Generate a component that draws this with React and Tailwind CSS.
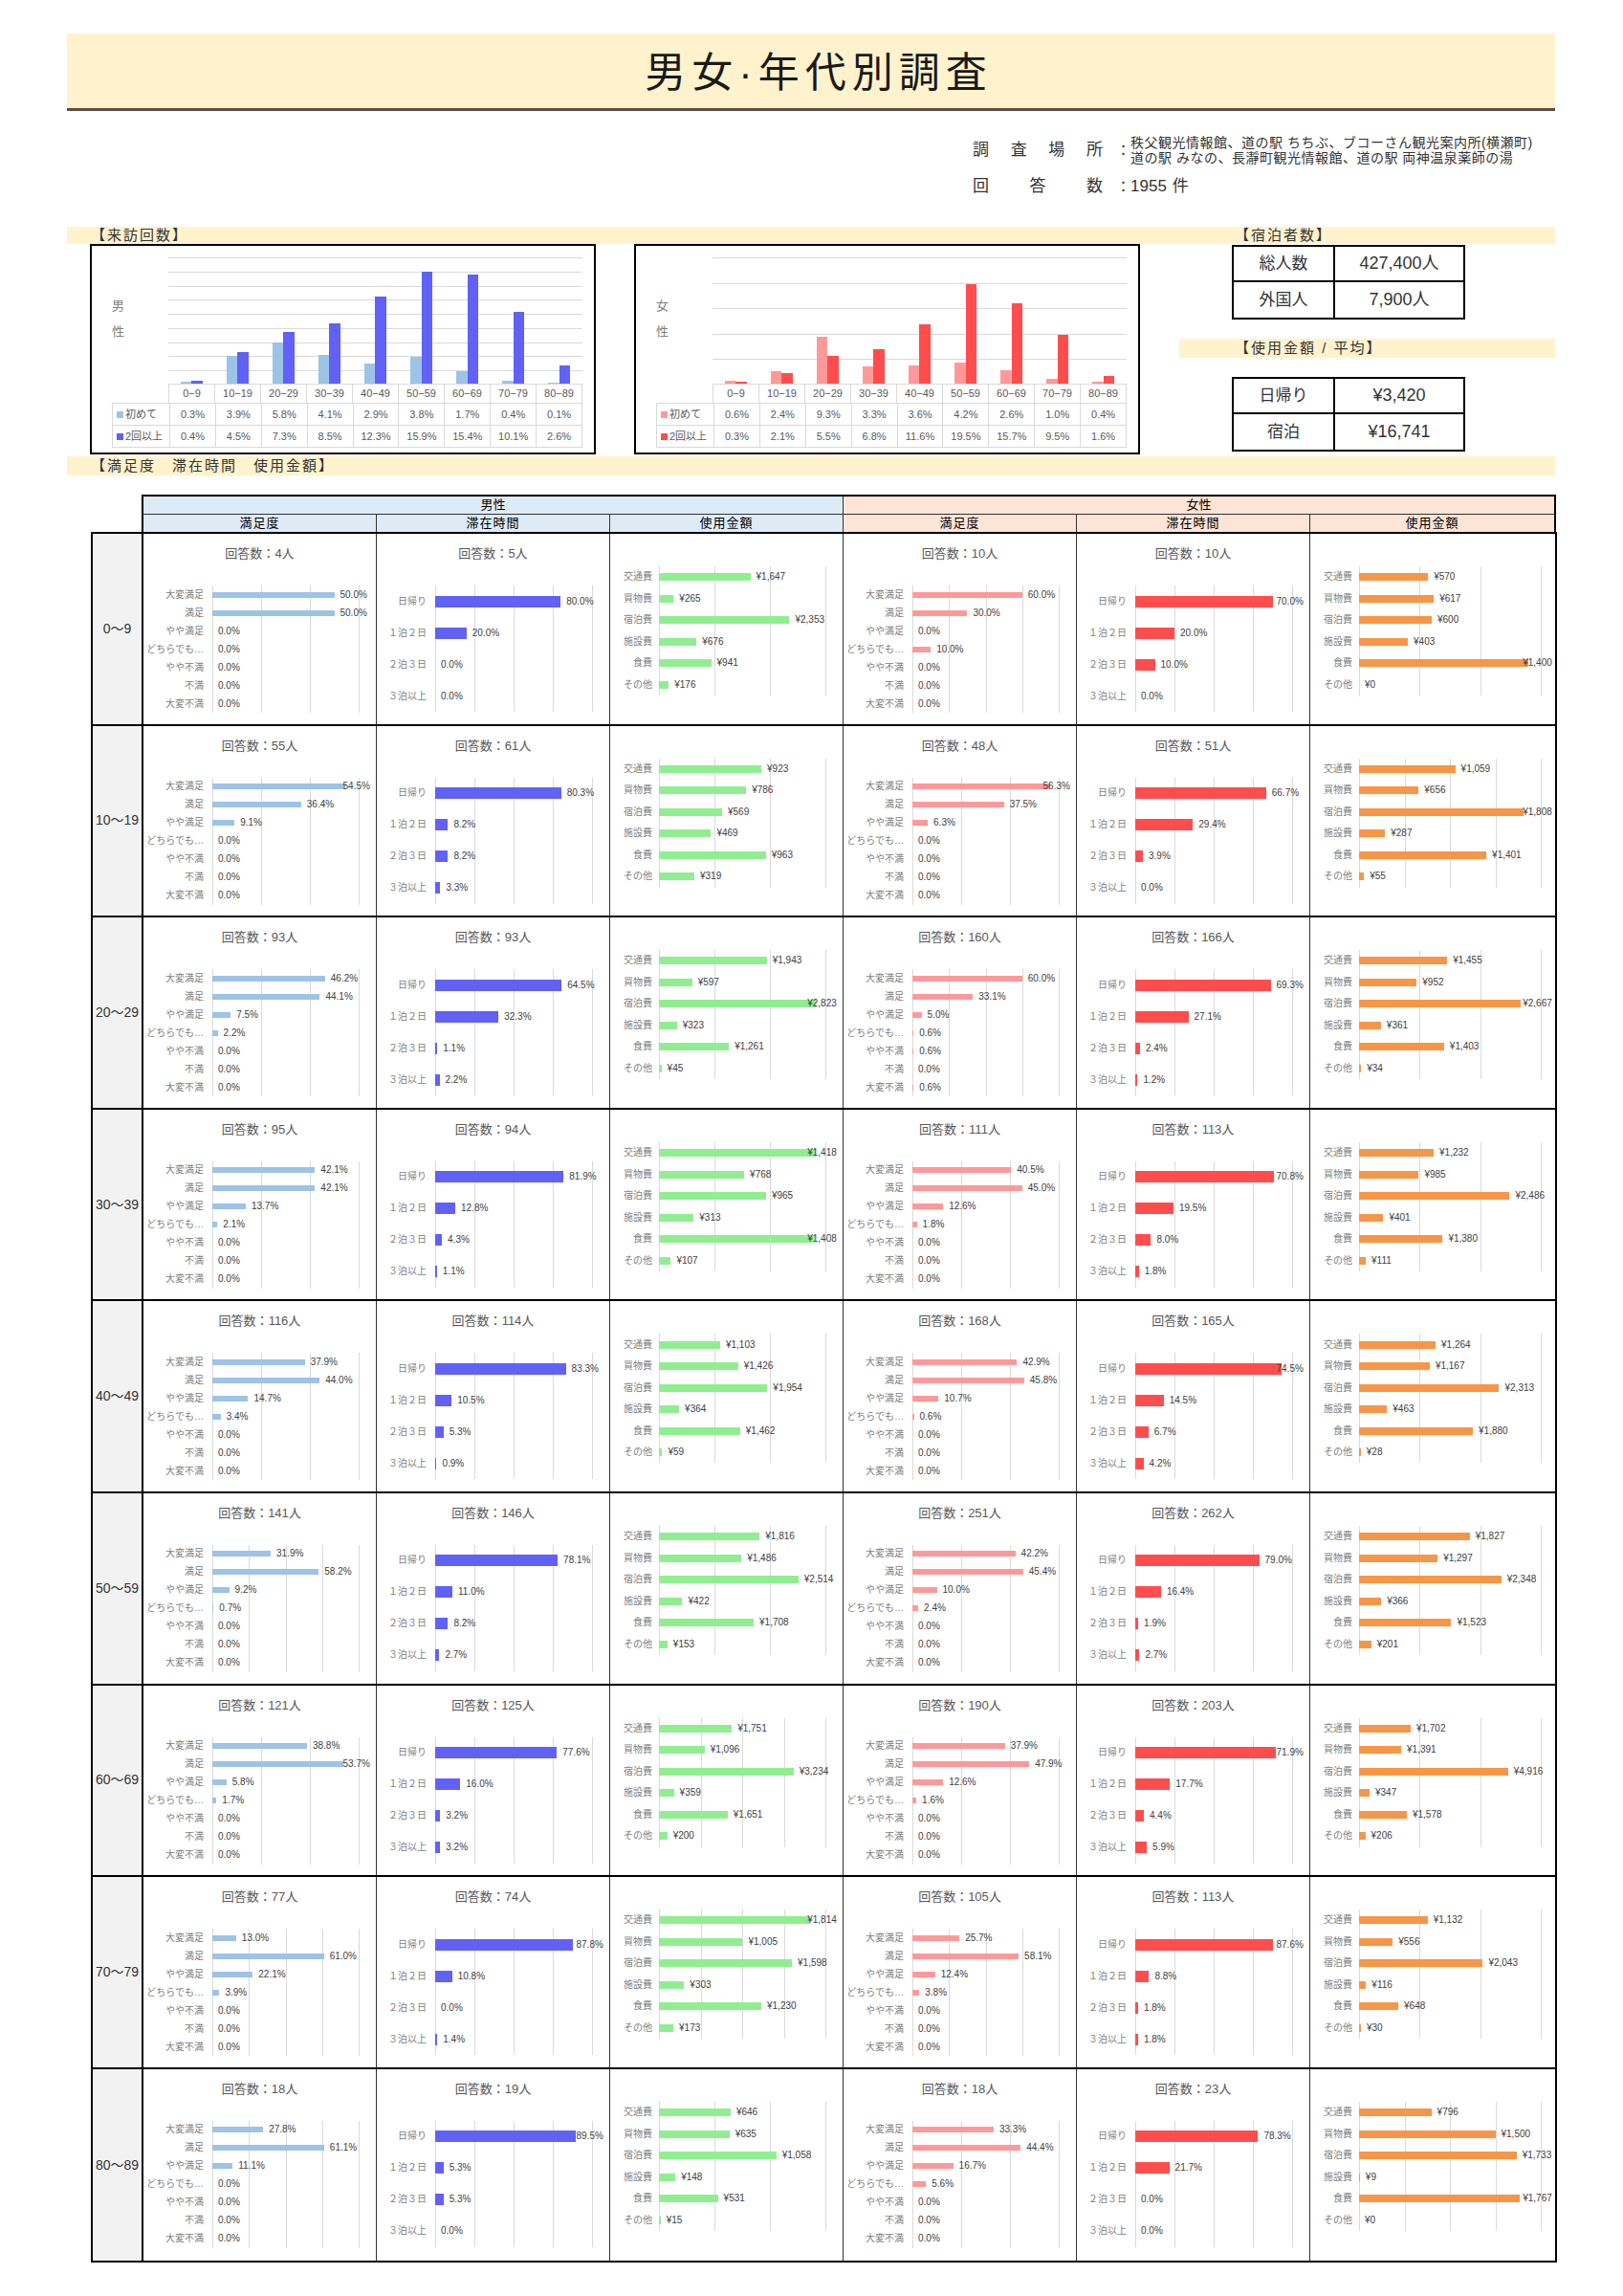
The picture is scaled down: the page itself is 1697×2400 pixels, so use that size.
import React from "react";

const AGES = ["0～9", "10～19", "20～29", "30～39", "40～49", "50～59", "60～69", "70～79", "80～89"];
const TOP_AGES = ["0−9", "10−19", "20−29", "30−39", "40−49", "50−59", "60−69", "70−79", "80−89"];

const SAT = ["大変満足", "満足", "やや満足", "どちらでも…", "やや不満", "不満", "大変不満"];
const STAY = ["日帰り", "１泊２日", "２泊３日", "３泊以上"];
const SPEND = ["交通費", "買物費", "宿泊費", "施設費", "食費", "その他"];

// [満足度回答数, 満足度, 滞在回答数, 滞在時間, 使用金額]
const DATA = [
  {
    m: [4, [50.0, 50.0, 0, 0, 0, 0, 0], 5, [80.0, 20.0, 0, 0], [1647, 265, 2353, 676, 941, 176]],
    f: [10, [60.0, 30.0, 0, 10.0, 0, 0, 0], 10, [70.0, 20.0, 10.0, 0], [570, 617, 600, 403, 1400, 0]],
  },
  {
    m: [55, [54.5, 36.4, 9.1, 0, 0, 0, 0], 61, [80.3, 8.2, 8.2, 3.3], [923, 786, 569, 469, 963, 319]],
    f: [48, [56.3, 37.5, 6.3, 0, 0, 0, 0], 51, [66.7, 29.4, 3.9, 0], [1059, 656, 1808, 287, 1401, 55]],
  },
  {
    m: [93, [46.2, 44.1, 7.5, 2.2, 0, 0, 0], 93, [64.5, 32.3, 1.1, 2.2], [1943, 597, 2823, 323, 1261, 45]],
    f: [160, [60.0, 33.1, 5.0, 0.6, 0.6, 0, 0.6], 166, [69.3, 27.1, 2.4, 1.2], [1455, 952, 2667, 361, 1403, 34]],
  },
  {
    m: [95, [42.1, 42.1, 13.7, 2.1, 0, 0, 0], 94, [81.9, 12.8, 4.3, 1.1], [1418, 768, 965, 313, 1408, 107]],
    f: [111, [40.5, 45.0, 12.6, 1.8, 0, 0, 0], 113, [70.8, 19.5, 8.0, 1.8], [1232, 985, 2486, 401, 1380, 111]],
  },
  {
    m: [116, [37.9, 44.0, 14.7, 3.4, 0, 0, 0], 114, [83.3, 10.5, 5.3, 0.9], [1103, 1426, 1954, 364, 1462, 59]],
    f: [168, [42.9, 45.8, 10.7, 0.6, 0, 0, 0], 165, [74.5, 14.5, 6.7, 4.2], [1264, 1167, 2313, 463, 1880, 28]],
  },
  {
    m: [141, [31.9, 58.2, 9.2, 0.7, 0, 0, 0], 146, [78.1, 11.0, 8.2, 2.7], [1816, 1486, 2514, 422, 1708, 153]],
    f: [251, [42.2, 45.4, 10.0, 2.4, 0, 0, 0], 262, [79.0, 16.4, 1.9, 2.7], [1827, 1297, 2348, 366, 1523, 201]],
  },
  {
    m: [121, [38.8, 53.7, 5.8, 1.7, 0, 0, 0], 125, [77.6, 16.0, 3.2, 3.2], [1751, 1096, 3234, 359, 1651, 200]],
    f: [190, [37.9, 47.9, 12.6, 1.6, 0, 0, 0], 203, [71.9, 17.7, 4.4, 5.9], [1702, 1391, 4916, 347, 1578, 206]],
  },
  {
    m: [77, [13.0, 61.0, 22.1, 3.9, 0, 0, 0], 74, [87.8, 10.8, 0, 1.4], [1814, 1005, 1598, 303, 1230, 173]],
    f: [105, [25.7, 58.1, 12.4, 3.8, 0, 0, 0], 113, [87.6, 8.8, 1.8, 1.8], [1132, 556, 2043, 116, 648, 30]],
  },
  {
    m: [18, [27.8, 61.1, 11.1, 0, 0, 0, 0], 19, [89.5, 5.3, 5.3, 0], [646, 635, 1058, 148, 531, 15]],
    f: [18, [33.3, 44.4, 16.7, 5.6, 0, 0, 0], 23, [78.3, 21.7, 0, 0], [796, 1500, 1733, 9, 1767, 0]],
  },
];

const M_FIRST = [0.3, 3.9, 5.8, 4.1, 2.9, 3.8, 1.7, 0.4, 0.1];
const M_REP = [0.4, 4.5, 7.3, 8.5, 12.3, 15.9, 15.4, 10.1, 2.6];
const F_FIRST = [0.6, 2.4, 9.3, 3.3, 3.6, 4.2, 2.6, 1.0, 0.4];
const F_REP = [0.3, 2.1, 5.5, 6.8, 11.6, 19.5, 15.7, 9.5, 1.6];

const pct = (v) => v.toFixed(1) + "%";
const yen = (v) => "¥" + v.toLocaleString("en-US");

// rough width of a label in Liberation Sans 10px
const textW = (s) =>
  [...s].reduce((a, c) => a + (c === "%" ? 8.9 : c === "." || c === "," ? 2.8 : 5.6), 0);

const pctAxis = (m) => {
  const step = m > 40 ? 20 : 10;
  let axis = Math.ceil((m * 1.05) / step) * step;
  if (axis > 100) axis = 100;
  return { axis, step: axis === 100 ? 25 : step };
};

const yenAxis = (m) => {
  const t = Math.max(m * 1.05, 1);
  const s = [100, 200, 250, 500, 1000, 2000].find((c) => t / c <= 4) || 2000;
  return { axis: Math.ceil(t / s) * s, step: s };
};

function HBar({ labels, values, isYen, labelCls, plotCls, plotW, rowCls, barCls }) {
  const vmax = Math.max(...values);
  const { axis, step } = isYen ? yenAxis(vmax) : pctAxis(vmax);
  const lines = [];
  for (let v = 0; v <= axis + 0.001; v += step) lines.push(v);
  return (
    <div className="flex">
      <div className={`${labelCls} shrink-0`}>
        {labels.map((l) => (
          <div key={l} className={`${rowCls} flex items-center justify-end text-[10px] leading-none text-[#808080] whitespace-nowrap`}>
            {l}
          </div>
        ))}
      </div>
      <div className={`${plotCls} relative shrink-0`}>
        {lines.map((v) => (
          <div key={v} className="absolute top-0 bottom-0 w-px bg-[#d9d9d9]" style={{ left: (v / axis) * plotW }} />
        ))}
        {values.map((v, i) => {
          const w = (v / axis) * plotW;
          const txt = isYen ? yen(v) : pct(v);
          const tw = textW(txt);
          let ml = 6;
          if (w + ml + tw > plotW + 12) ml = plotW + 12 - tw - w;
          return (
            <div key={i} className={`${rowCls} relative flex items-center`}>
              <div className={`${barCls} shrink-0`} style={{ width: w }} />
              <span className="relative shrink-0 text-[10px] leading-none text-[#404040] whitespace-nowrap" style={{ marginLeft: ml }}>
                {txt}
              </span>
            </div>
          );
        })}
      </div>
    </div>
  );
}

function Title({ n }) {
  return (
    <div className="mt-[14px] h-[14px] text-center text-[13px] leading-[14px] text-[#595959]">
      回答数：{n}人
    </div>
  );
}

function SexCells({ d, female }) {
  const [sn, s, tn, t, y] = d;
  return (
    <>
      <div className="w-[244px] shrink-0 border-r border-[#333]">
        <Title n={sn} />
        <div className="mt-[26px]">
          <HBar
            labels={SAT}
            values={s}
            labelCls="w-[72px] pr-[9px]"
            plotCls="w-[153px]"
            plotW={153}
            rowCls="h-[19px]"
            barCls={female ? "h-[6px] bg-[#ff9999]" : "h-[6px] bg-[#9dc3e6]"}
          />
        </div>
      </div>
      <div className="w-[244px] shrink-0 border-r border-[#333]">
        <Title n={tn} />
        <div className="mt-[26px]">
          <HBar
            labels={STAY}
            values={t}
            labelCls="w-[61px] pr-[9px]"
            plotCls="w-[164px]"
            plotW={164}
            rowCls="h-[33px]"
            barCls={female ? "h-[12px] bg-[#ff4d4d]" : "h-[12px] bg-[#6161f6]"}
          />
        </div>
      </div>
      <div className={female ? "flex-1 pt-[34px]" : "w-[244px] shrink-0 border-r border-[#333] pt-[34px]"}>
        <HBar
          labels={SPEND}
          values={y}
          isYen
          labelCls="w-[51px] pr-[7px]"
          plotCls={female ? "w-[190px]" : "w-[174px]"}
          plotW={female ? 190 : 174}
          rowCls="h-[22.5px]"
          barCls={female ? "h-[8px] bg-[#f79646]" : "h-[8px] bg-[#90ee90]"}
        />
      </div>
    </>
  );
}

function ColChart({ sex, first, rep, c1, c2, max, n, cls }) {
  const H = 133;
  const grid = Array.from({ length: n }, (_, i) => (i * H) / n);
  return (
    <div className={`${cls} h-[220px] shrink-0 border-2 border-black bg-white pt-[12px]`}>
      <div className="flex">
        <div className="w-[80px] shrink-0 pl-[21px] pt-[44px] flex flex-col gap-[14px] text-[13px] leading-[13px] text-[#7f7f7f]">
          <span>{sex[0]}</span>
          <span>{sex[1]}</span>
        </div>
        <div className="relative h-[133px] w-[433px] border-b border-[#d9d9d9]">
          {grid.map((g) => (
            <div key={g} className="absolute left-0 right-0 h-px bg-[#d9d9d9]" style={{ top: g }} />
          ))}
          <div className="absolute inset-0 flex items-end">
            {first.map((v, i) => (
              <div key={i} className="flex-1 flex justify-center items-end">
                <div className={`w-[11.5px] ${c1}`} style={{ height: (v / max) * H }} />
                <div className={`w-[11.5px] ${c2}`} style={{ height: (rep[i] / max) * H }} />
              </div>
            ))}
          </div>
        </div>
      </div>
      <div className="ml-[21px] w-[492px] text-[11px] text-[#595959]">
        <div className="flex h-[19px]">
          <div className="w-[59px] shrink-0" />
          {TOP_AGES.map((a, i) => (
            <div key={a} className={`flex-1 flex items-center justify-center border-l border-[#d9d9d9] ${i === 8 ? "border-r" : ""}`}>
              {a}
            </div>
          ))}
        </div>
        {[
          ["初めて", first, c1, "h-[23px]"],
          ["2回以上", rep, c2, "h-[24px] border-b"],
        ].map(([lab, vals, c, h]) => (
          <div key={lab} className={`flex ${h} border-t border-x border-[#d9d9d9]`}>
            <div className="w-[59px] shrink-0 flex items-center pl-[4px]">
              <span className={`w-[7px] h-[7px] mr-[2px] ${c}`} />
              {lab}
            </div>
            {vals.map((v, i) => (
              <div key={i} className="flex-1 flex items-center justify-center border-l border-[#d9d9d9]">
                {pct(v)}
              </div>
            ))}
          </div>
        ))}
      </div>
    </div>
  );
}

function StatTable({ rows }) {
  return (
    <div className="ml-[55px] w-[244px] border-2 border-black text-[#333]">
      {rows.map(([a, b], i) => (
        <div key={a} className={`flex h-[37px] ${i === 0 ? "border-b-2 border-black" : ""}`}>
          <div className="w-[106px] border-r-2 border-black flex items-center justify-center text-[17px]">{a}</div>
          <div className="flex-1 flex items-center justify-center text-[18px]">{b}</div>
        </div>
      ))}
    </div>
  );
}

const Band = ({ children, cls = "" }) => (
  <div className={`bg-[#fff2cc] flex items-center text-[15px] tracking-[2px] text-[#333] ${cls}`}>{children}</div>
);

export default function App() {
  return (
    <div className="w-[1697px] h-[2400px] bg-white pt-[35px] font-['Liberation_Sans','Noto_Sans_CJK_JP',sans-serif] text-[#222]">
      <div className="ml-[70px] w-[1556px]">
        <div className="h-[81px] bg-[#fff2cc] border-b-[3px] border-[#5b4f3f] flex items-center justify-center pl-[16px]">
          <h1 className="text-[43px] leading-none tracking-[6px] font-['Noto_Sans_CJK_JP',sans-serif] font-normal text-[#1a1a1a]">
            男女<span className="font-['Liberation_Sans',sans-serif]">·</span>年代別調査
          </h1>
        </div>

        <div className="ml-[947px] mt-[24px] text-[#333]">
          <div className="flex items-center h-[34px]">
            <div className="w-[136px] flex justify-between text-[17px]">
              <span>調</span><span>査</span><span>場</span><span>所</span>
            </div>
            <span className="ml-[14px] text-[15px]">：</span>
            <div className="text-[14px] leading-[16px] tracking-[0.5px]">
              <div>秩父観光情報館、道の駅 ちちぶ、ブコーさん観光案内所(横瀬町)</div>
              <div>道の駅 みなの、長瀞町観光情報館、道の駅 両神温泉薬師の湯</div>
            </div>
          </div>
          <div className="flex items-center h-[20px] mt-[11px]">
            <div className="w-[136px] flex justify-between text-[17px]">
              <span>回</span><span>答</span><span>数</span>
            </div>
            <span className="ml-[14px] text-[15px]">：</span>
            <span className="text-[17px]">1955</span>
            <span className="ml-[6px] text-[17px]">件</span>
          </div>
        </div>

        <Band cls="mt-[32px] h-[18px]">
          <div className="w-[1221px] pl-[25px]">【来訪回数】</div>
          <div>【宿泊者数】</div>
        </Band>

        <div className="flex h-[222px]">
          <ColChart
            sex="男性"
            first={M_FIRST}
            rep={M_REP}
            c1="bg-[#9dc3e6]"
            c2="bg-[#6161f6]"
            max={18}
            n={9}
            cls="ml-[24px] w-[529px]"
          />
          <ColChart
            sex="女性"
            first={F_FIRST}
            rep={F_REP}
            c1="bg-[#ff9999]"
            c2="bg-[#ff4d4d]"
            max={25}
            n={5}
            cls="ml-[40px] w-[529px]"
          />
          <div className="ml-[41px] w-[393px]">
            <div className="mt-[1px]">
              <StatTable rows={[["総人数", "427,400人"], ["外国人", "7,900人"]]} />
            </div>
            <Band cls="mt-[20px] h-[20px] pl-[58px]">【使用金額 / 平均】</Band>
            <div className="mt-[20px]">
              <StatTable rows={[["日帰り", "¥3,420"], ["宿泊", "¥16,741"]]} />
            </div>
          </div>
        </div>

        <Band cls="h-[20px] pl-[25px]">【満足度　滞在時間　使用金額】</Band>

        <div className="mt-[20px] ml-[78px] w-[1479px] border-t-2 border-x-2 border-black text-[13px] text-black">
          <div className="flex h-[19px] border-b border-[#333]">
            <div className="w-[732px] border-r border-[#333] bg-[#ddebf7] flex items-center justify-center">男性</div>
            <div className="flex-1 bg-[#fce4d6] flex items-center justify-center">女性</div>
          </div>
          <div className="flex h-[18px]">
            {["満足度", "滞在時間", "使用金額"].map((h) => (
              <div key={"m" + h} className="w-[244px] border-r border-[#333] bg-[#ddebf7] flex items-center justify-center tracking-[1px]">
                {h}
              </div>
            ))}
            {["満足度", "滞在時間", "使用金額"].map((h, i) => (
              <div
                key={"f" + h}
                className={`${i === 2 ? "flex-1" : "w-[244px] border-r border-[#333]"} bg-[#fce4d6] flex items-center justify-center tracking-[1px]`}
              >
                {h}
              </div>
            ))}
          </div>
        </div>

        <div className="ml-[25px] w-[1533px] border-2 border-black">
          {DATA.map((r, i) => (
            <div key={i} className={`flex h-[200.6px] ${i < DATA.length - 1 ? "border-b-2 border-black" : ""}`}>
              <div className="w-[53px] shrink-0 border-r-2 border-black bg-[#f2f2f2] flex items-center justify-center text-[14px] text-[#333]">
                {AGES[i]}
              </div>
              <SexCells d={r.m} />
              <SexCells d={r.f} female />
            </div>
          ))}
        </div>
      </div>
    </div>
  );
}
